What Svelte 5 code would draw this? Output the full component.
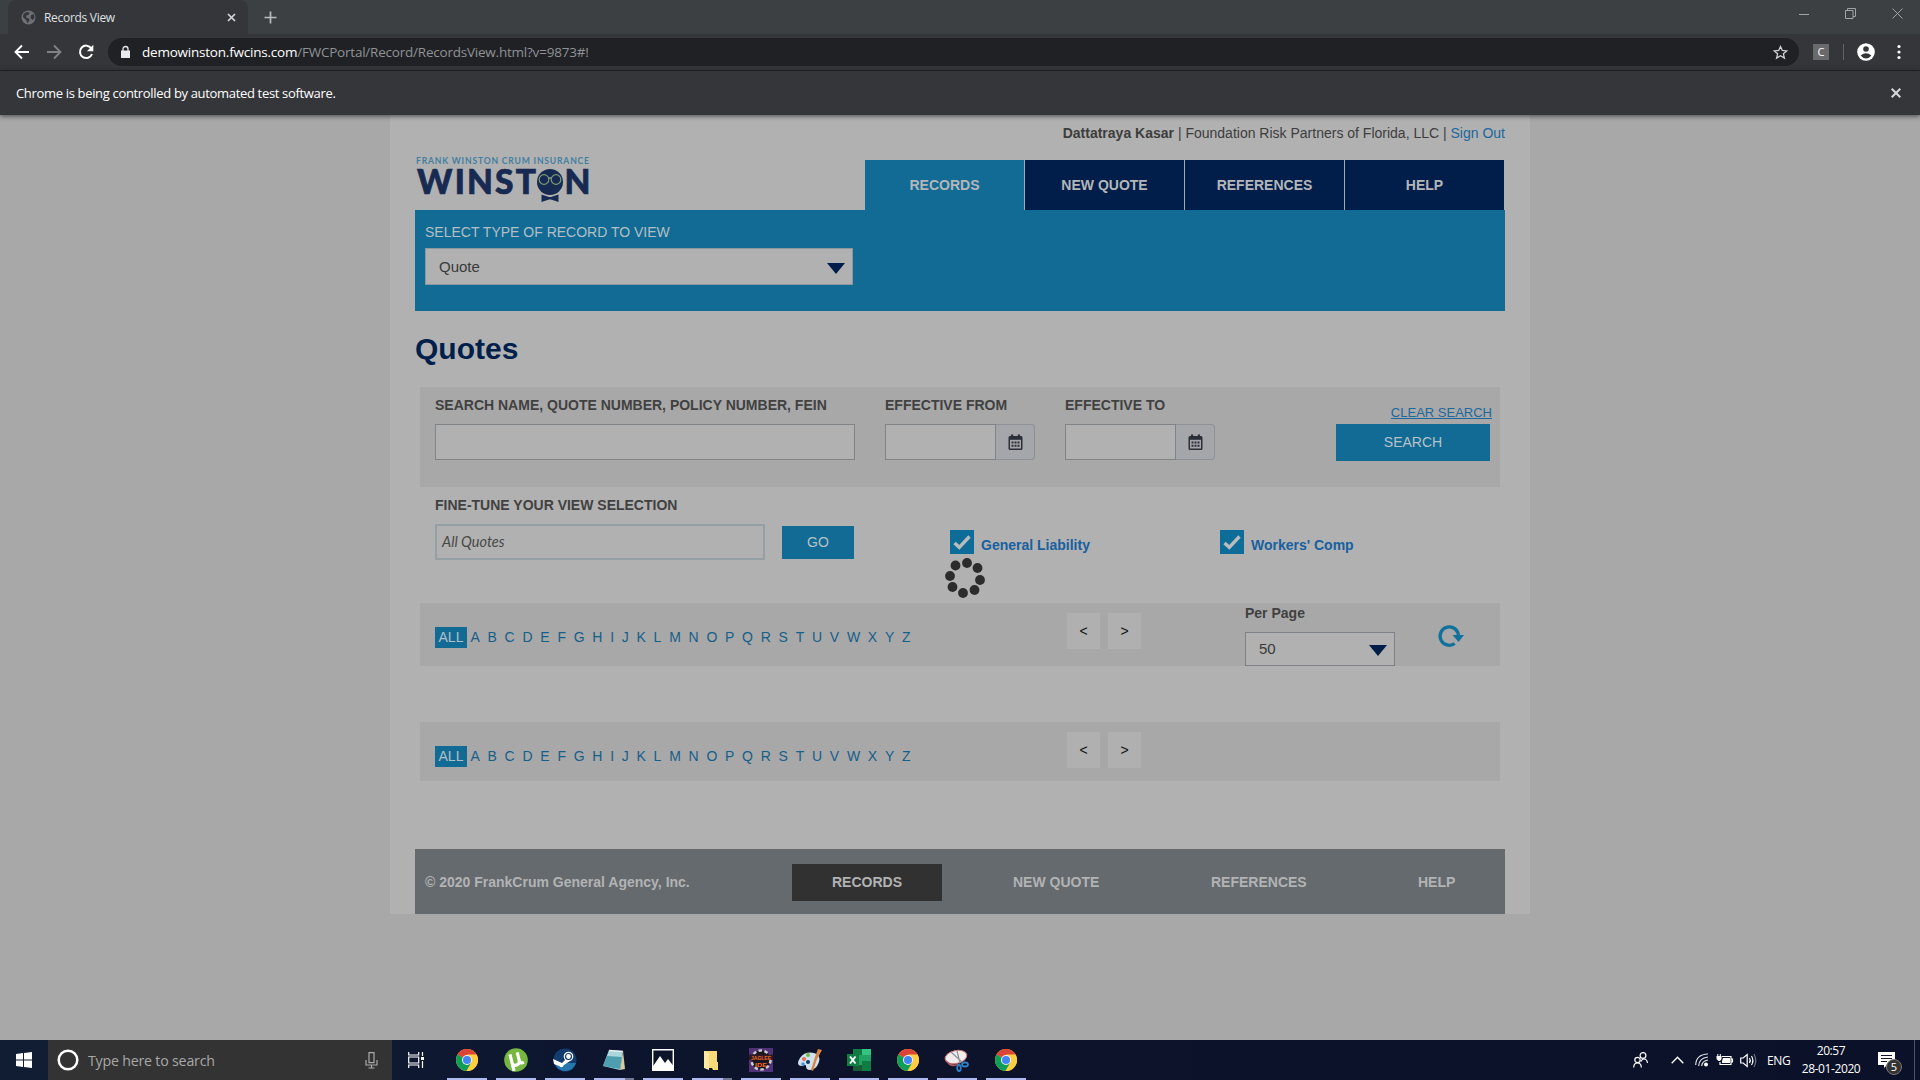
<script>
  const letters = 'ABCDEFGHIJKLMNOPQRSTUVWXYZ'.split('');
  const tabs = ['RECORDS', 'NEW QUOTE', 'REFERENCES', 'HELP'];
  const apps = ['chrome', 'utorrent', 'steam', 'notepad', 'photos', 'folder', 'ide', 'paint', 'excel', 'chrome', 'snip', 'chrome'];
  const dots = [[20, 5], [30.5, 10], [33, 22], [27.5, 32], [16, 35], [5.5, 29], [3, 18], [8.5, 7.5]];
</script>

{#snippet calendar()}
  <svg width="15" height="17" viewBox="0 0 15 17"><path d="M2 2h1V.5h2.200V2h4.600V.5H12V2h1a1.500 1.500 0 0 1 1.500 1.500v11A1.500 1.500 0 0 1 13 16H2A1.500 1.500 0 0 1 .5 14.500v-11A1.500 1.500 0 0 1 2 2z" fill="#2c2f38"/><path d="M2 5.800h11v8.700H2z" fill="#a4a6aa"/><path d="M3.500 7.500h2v2h-2zm3 0h2v2h-2zm3 0h2v2h-2zm-6 3.200h2v2h-2zm3 0h2v2h-2zm3 0h2v2h-2z" fill="#2c2f38"/></svg>
{/snippet}

{#snippet alphabet()}
  <div class="alphabet">
    <span class="all">ALL</span>
    {#each letters as l}<span>{l}</span>{/each}
  </div>
  <div class="pager"><button>&lt;</button><button>&gt;</button></div>
{/snippet}

{#snippet check()}
  <span class="check"><svg width="24" height="24" viewBox="0 0 24 24"><path d="M4.500 13l4.800 4.300L19.500 6.500" fill="none" stroke="#b8bcbe" stroke-width="3.400"/></svg></span>
{/snippet}

<div class="screen">
  <div class="tabstrip">
    <div class="stub"></div>
    <div class="tab">
      <svg width="15" height="15" viewBox="0 0 15 15"><circle cx="7.500" cy="7.500" r="7" fill="#6d7175"/><path d="M2.500 4l3-2 3 .5-.5 2-2.500 1-.5 2 3 1 .5 2-2 2.500-1.500-3-3-3zM10 5l3-1 .5 4-2 2-2-2z" fill="#35363a"/></svg>
      <span class="tabname">Records View</span>
      <svg class="tabx" width="9" height="9" viewBox="0 0 9 9"><path d="M1 1l7 7M8 1l-7 7" stroke="#d5d7d9" stroke-width="1.700"/></svg>
    </div>
    <svg class="plus" width="13" height="13" viewBox="0 0 13 13"><path d="M6.500 .5v12M.5 6.500h12" stroke="#b9bbbd" stroke-width="1.700"/></svg>
    <div class="winctl">
      <svg width="10" height="12" viewBox="0 0 10 12"><path d="M0 6.500h10" stroke="#a1a4a6"/></svg>
      <svg width="11" height="11" viewBox="0 0 11 11"><path d="M.5 2.500h7.500v8H.5zM2.500 2.500v-2h8v8H8" fill="none" stroke="#a1a4a6"/></svg>
      <svg width="11" height="11" viewBox="0 0 11 11"><path d="M.5 .5l10 10M10.500 .5l-10 10" stroke="#a1a4a6"/></svg>
    </div>
  </div>
  <div class="toolbar">
    <svg width="16" height="16" viewBox="0 0 16 16"><path d="M15 8H2M8 1.500L1.500 8 8 14.500" fill="none" stroke="#fff" stroke-width="1.900"/></svg>
    <svg width="16" height="16" viewBox="0 0 16 16"><path d="M1 8h13M8 1.500L14.500 8 8 14.500" fill="none" stroke="#7f8184" stroke-width="1.900"/></svg>
    <svg width="16" height="16" viewBox="0 0 16 16"><path d="M13.300 4.300A6.200 6.200 0 1 0 14 10" fill="none" stroke="#fff" stroke-width="2"/><path d="M15.300 .8v6.400H8.900z" fill="#fff"/></svg>
    <div class="address">
      <svg width="9" height="13" viewBox="0 0 9 13"><path d="M0 4.500h9V12H0z" fill="#e8eaed"/><path d="M2 5V3a2.500 2.500 0 0 1 5 0v2" fill="none" stroke="#e8eaed" stroke-width="1.300"/></svg>
      <span class="url"><b>demowinston.fwcins.com</b>/FWCPortal/Record/RecordsView.html?v=9873#!</span>
      <svg class="star" width="15" height="15" viewBox="0 0 15 15"><path d="M7.500 1.500l1.800 4 4.400.4-3.300 2.900 1 4.300-3.900-2.300-3.900 2.300 1-4.300L1.300 5.900l4.400-.4z" fill="none" stroke="#d0d2d4" stroke-width="1.300"/></svg>
    </div>
    <span class="ext">C</span>
    <span class="sep"></span>
    <svg class="avatar" width="18" height="18" viewBox="0 0 18 18"><circle cx="9" cy="9" r="8.800" fill="#fff"/><circle cx="9" cy="6" r="2.800" fill="#35363a"/><path d="M3.600 12.500q5.400-4.500 10.800 0Q12 15.500 9 15.500t-5.400-3z" fill="#35363a"/></svg>
    <svg class="menu" width="4" height="16" viewBox="0 0 4 16"><circle cx="2" cy="2.500" r="1.600" fill="#fff"/><circle cx="2" cy="8" r="1.600" fill="#fff"/><circle cx="2" cy="13.500" r="1.600" fill="#fff"/></svg>
  </div>
  <div class="infobar">
    <span>Chrome is being controlled by automated test software.</span>
    <svg width="10" height="10" viewBox="0 0 10 10"><path d="M.7 .7l8.600 8.600M9.300 .7L.7 9.300" stroke="#d5d7d9" stroke-width="2"/></svg>
  </div>

  <main>
    <div class="site">
      <div class="user"><span><b>Dattatraya Kasar</b> | Foundation Risk Partners of Florida, LLC | <a href="#out">Sign Out</a></span></div>
      <div class="head">
        <svg class="logo" width="176" height="50" viewBox="0 0 176 50">
          <text x="1" y="9.700" textLength="173" font-family="Lato" font-weight="700" font-size="8.600" fill="#437fa0">FRANK WINSTON CRUM INSURANCE</text>
          <text x="2" y="39.500" textLength="119" font-family="Lato" font-weight="900" font-size="33.500" fill="#172a52" stroke="#172a52" stroke-width=".7">WINST</text>
          <circle cx="135" cy="28" r="13" fill="#172a52"/>
          <g fill="none" stroke="#7d9b78" stroke-width="1.200"><circle cx="129" cy="25.500" r="4.800"/><circle cx="141" cy="25.500" r="4.800"/><path d="M133.500 24.500q1.500-1.500 3 0"/></g>
          <path d="M126.500 40.500l7.500 2.500h2l7.500-2.500v7.500l-7.500-2.500h-2l-7.500 2.500z" fill="#172a52"/>
          <text x="149.500" y="39.500" font-family="Lato" font-weight="900" font-size="33.500" fill="#172a52" stroke="#172a52" stroke-width=".7">N</text>
        </svg>
        <nav>{#each tabs as t, i}<span class:active={i === 0}>{t}</span>{/each}</nav>
      </div>
      <section class="type">
        <div class="typelabel">SELECT TYPE OF RECORD TO VIEW</div>
        <div class="select"><span>Quote</span><i></i></div>
      </section>
      <h1>Quotes</h1>

      <section class="search">
        <div class="field wide"><label for="q">SEARCH NAME, QUOTE NUMBER, POLICY NUMBER, FEIN</label><input id="q" /></div>
        <div class="field"><label for="from">EFFECTIVE FROM</label><div class="date"><input id="from" /><span>{@render calendar()}</span></div></div>
        <div class="field to"><label for="to">EFFECTIVE TO</label><div class="date"><input id="to" /><span>{@render calendar()}</span></div></div>
        <div class="actions"><a href="#clear">CLEAR SEARCH</a><button>SEARCH</button></div>
      </section>

      <section class="tune">
        <div class="field"><label for="v">FINE-TUNE YOUR VIEW SELECTION</label>
          <div class="tunerow"><div class="view" id="v">All Quotes</div><button>GO</button></div></div>
        <div class="opt">{@render check()}<span>General Liability</span></div>
        <div class="opt">{@render check()}<span>Workers' Comp</span></div>
        <svg class="spinner" width="42" height="42" viewBox="-2 0 42 42">{#each dots as [x, y]}<circle cx={x} cy={y} r="4.900" fill="#2c2c2c"/>{/each}</svg>
      </section>

      <section class="bar">
        {@render alphabet()}
        <div class="perpage"><span class="lab">Per Page</span><div class="select small"><span>50</span><i></i></div></div>
        <svg class="refresh" width="25" height="24" viewBox="0 0 25 24"><path d="M15.700 19.500A9.200 9.200 0 1 1 19.500 12" fill="none" stroke="#0f719c" stroke-width="3.300"/><path d="M13.500 11H25l-5.500 7z" fill="#0f719c"/></svg>
      </section>
      <section class="bar second">{@render alphabet()}</section>

      <footer>
        <span class="copy">© 2020 FrankCrum General Agency, Inc.</span>
        {#each tabs as t, i}<span class="f{i}">{t}</span>{/each}
      </footer>
    </div>
  </main>

  <div class="taskbar">
    <div class="start"><svg width="16" height="16" viewBox="0 0 16 16"><path d="M0 2l7-1v6.500H0zM8 .9L16 0v7.500H8zM0 8.500h7V15l-7-1zM8 8.500h8V16l-8-1z" fill="#fff"/></svg></div>
    <div class="find">
      <svg width="22" height="22" viewBox="0 0 22 22"><circle cx="11" cy="11" r="9.300" fill="none" stroke="#fff" stroke-width="2.500"/></svg>
      <span>Type here to search</span>
      <svg width="13" height="17" viewBox="0 0 13 17"><path d="M4 .7h5v10H4zM1 8v5h11V8M6.500 13v3M3.500 16h6" fill="none" stroke="#aaa" stroke-width="1.200"/></svg>
    </div>
    <div class="taskview"><svg width="17" height="16" viewBox="0 0 17 16"><path d="M.7 0v3h10V0M.7 5h10v6H.7zM.7 16v-3h10v3M14.500 0v4M14.500 9v7" fill="none" stroke="#fff" stroke-width="1.200"/><path d="M13 5h3v3h-3z" fill="#fff"/></svg></div>
    {#each apps as a}
      <div class="app" class:multi={a === 'notepad' || a === 'folder'}>
        <svg width="24" height="24" viewBox="0 0 24 24">
          {#if a === 'chrome'}
            <circle cx="12" cy="12" r="11" fill="#ffcd40"/><path d="M12 12L2.500 6.500A11 11 0 0 1 21.500 6.500z" fill="#db4437"/><path d="M12 12L2.500 6.500A11 11 0 0 0 11.500 23l5-8.500z" fill="#0f9d58"/><path d="M11.500 23a11 11 0 0 0 10-16.500H12l4.500 8z" fill="#ffcd40"/><circle cx="12" cy="12" r="5" fill="#f1f1f1"/><circle cx="12" cy="12" r="4" fill="#4285f4"/>
          {:else if a === 'utorrent'}
            <circle cx="12" cy="12" r="11.800" fill="#76b83f"/><g transform="rotate(-14 12 12)"><path d="M7.500 5v9q0 3 3.500 3t4-3.500V5M15 13q0 4 4 3M7.500 12v10" fill="none" stroke="#fff" stroke-width="3.200"/></g>
          {:else if a === 'steam'}
            <circle cx="12" cy="12" r="11.500" fill="#123c70"/><path d="M1 15q5 9 12 8 8-1 10-8z" fill="#2577b0"/><path d="M0 11l9 4 5-5 3 3-6 4q-2 4-5 1l-5-2z" fill="#fff"/><circle cx="15.500" cy="8.500" r="4.800" fill="#fff"/><circle cx="15.500" cy="8.500" r="3" fill="none" stroke="#123c70" stroke-width="1.200"/>
          {:else if a === 'notepad'}
            <path d="M7 2l14 1-3 19L1 18z" fill="#a9d5dd"/><path d="M5 8l15 1-2 12L1 18z" fill="#4d9eaf"/><path d="M21 3l2 18-5 1z" fill="#d6cda8"/><path d="M7 2.500l14 1" stroke="#e9eef0" stroke-width="1.500"/>
          {:else if a === 'photos'}
            <path d="M1.700 1.700h20.600v20.600H1.700z" fill="#0c142b" stroke="#fff" stroke-width="1.400"/><path d="M1.500 19L9 8l5 7 3-4 5.500 7v4h-21z" fill="#fff"/>
          {:else if a === 'folder'}
            <path d="M4 3h13v11h1v8h-5l-1-2H4z" fill="#f9d978"/><path d="M4 3l5 2v17l-5-2z" fill="#ffe9a2"/>
          {:else if a === 'ide'}
            <path d="M0 0h24v24H0z" fill="#503279"/><circle cx="12" cy="12" r="9.500" fill="#1c1621" stroke="#ccc" stroke-width="2.500" stroke-dasharray="3.500 2.500"/><path d="M0 6.500h24v5.500H0z" fill="#2d1a25"/><text x="2" y="11.500" textLength="20" lengthAdjust="spacingAndGlyphs" font-size="6" font-weight="bold" fill="#f06a20" font-family="Liberation Sans">JAGLEE</text><text x="6" y="18.500" textLength="12" lengthAdjust="spacingAndGlyphs" font-size="6" font-weight="bold" fill="#f06a20" font-family="Liberation Sans">IDE</text>
          {:else if a === 'paint'}
            <path d="M2 10q5-7 14-5 7 2 5 9-3 8-9 8-4 0-4-4 0-2-4 0-4 0-4-3 0-2 2-5z" fill="#cfe2ee"/><circle cx="6" cy="11" r="2" fill="#e86d4c"/><circle cx="10" cy="7" r="2" fill="#70b84b"/><circle cx="5" cy="16" r="1.800" fill="#4a97db"/><circle cx="10" cy="14" r="2" fill="#12376b"/><path d="M20 1l4 1-5 9-4 12-2-1 4-13z" fill="#d88640"/>
          {:else if a === 'excel'}
            <path d="M6 1h18v22H6z" fill="#21a366"/><path d="M6 1h9v6H6z" fill="#107c41"/><path d="M15 1h9v6h-9z" fill="#33c481"/><path d="M15 13h9v10h-9z" fill="#107c41"/><path d="M6 17h9v6H6z" fill="#185c37"/><path d="M0 6h12v12H0z" fill="#107c41"/><path d="M3 8.500l5.500 7M8.500 8.500l-5.500 7" stroke="#fff" stroke-width="1.900"/>
          {:else}
            <ellipse cx="11" cy="9" rx="11" ry="6.500" fill="#f3ecec" stroke="#c77a7a" transform="rotate(-12 11 9)"/><path d="M1 12q7 8 16 2l-4 3Q4 21 1 12z" fill="#b05a5e"/><path d="M6 4l11 10M12 3l3 12" stroke="#8f9299" stroke-width="1.200"/><g fill="none" stroke="#2f80c2" stroke-width="1.800"><ellipse cx="14" cy="20" rx="1.800" ry="3"/><ellipse cx="20" cy="16.500" rx="3" ry="2"/></g>
          {/if}
        </svg>
      </div>
    {/each}
    <div class="tray">
      <svg width="15" height="16" viewBox="0 0 15 16"><g fill="none" stroke="#fff" stroke-width="1.200"><circle cx="10" cy="3.500" r="2.900"/><path d="M8 9.500q1-2.500 3-2.500 3 0 3.500 4"/><circle cx="4.500" cy="8" r="2.700"/><path d="M.7 15.500q0-4.500 3.800-4.500t3.800 4.500"/></g></svg>
      <svg class="t1" width="13" height="8" viewBox="0 0 13 8"><path d="M.7 7.300l5.800-6 5.800 6" fill="none" stroke="#fff" stroke-width="1.400"/></svg>
      <svg class="t2" width="14" height="14" viewBox="0 0 14 14"><g fill="none" stroke="#e3e5e8" stroke-width="1.200"><path d="M.7 12Q1 1.500 13 1"/><path d="M3.700 13Q4 5 13 4"/><path d="M6.700 13Q7 8 13 7"/></g><circle cx="11" cy="11.500" r="2" fill="#fff"/></svg>
      <svg class="t3" width="17" height="13" viewBox="0 0 17 13"><path d="M6 2.500h9v8H4V8M15 5h1.500v3H15" fill="none" stroke="#fff" stroke-width="1.200"/><path d="M7 4h7v5H6V7zM.5 2h5v3L4 7H2.500L.5 5zM1.300 0h1v2h-1zm2.500 0h1v2h-1z" fill="#fff"/></svg>
      <svg class="t4" width="17" height="15" viewBox="0 0 17 15"><g fill="none" stroke="#fff" stroke-width="1.200"><path d="M.7 5h2.500l4-3.500v12l-4-3.500H.7z"/><path d="M9.500 5q1.500 2.500 0 5M11.500 3q2.800 4.500 0 9"/><path d="M14 1q3.500 6.500 0 13" stroke="#6d7280"/></g></svg>
      <span class="lang">ENG</span>
      <div class="clock"><span>20:57</span><span>28-01-2020</span></div>
      <div class="note"><svg width="17" height="16" viewBox="0 0 17 16"><path d="M0 0h17v13h-8l-3 3v-3H0z" fill="#fff"/><path d="M3 3.500h11M3 6.500h11M3 9.500h6" stroke="#10172c" stroke-width="1.100"/></svg><span class="badge">5</span></div>
      <span class="peek"></span>
    </div>
  </div>
</div>

<style>
  :global(body) { overflow: hidden; }
  * { box-sizing: border-box; }
  .screen { width: 1920px; height: 1080px; display: flex; flex-direction: column; background: #a8a8a8; font-family: 'Liberation Sans', Arial, sans-serif; font-size: 14px; color: #3d3d3d; }
  svg { display: block; flex: none; overflow: visible; }
  a { color: #1c679c; }
  button { font: inherit; border: 0; padding: 0; }
  b { font-weight: bold; }

  .tabstrip { height: 34px; background: #3c4043; display: flex; align-items: stretch; flex: none; }
  .stub { width: 8px; }
  .tab { width: 240px; background: #35363a; border-radius: 8px 8px 0 0; display: flex; align-items: center; padding: 0 12px 0 13px; color: #dfe1e4; font: 12px 'Open Sans', sans-serif; }
  .tabname { margin-left: 8px; letter-spacing: -0.3px; }
  .tabx { margin-left: auto; }
  .plus { margin: 11px 0 0 16px; }
  .winctl { margin: 8px 17px 0 auto; display: flex; gap: 36px; }
  .toolbar { height: 37px; background: #35363a; border-bottom: 1px solid #252629; display: flex; align-items: center; padding: 0 19px 0 14px; flex: none; }
  .toolbar > svg + svg { margin-left: 16px; }
  .address { margin-left: 14px; width: 1692px; height: 28px; border-radius: 14px; background: #202124; display: flex; align-items: center; padding: 0 11px 0 13px; }
  .url { margin-left: 12px; font: 13.5px 'Open Sans', sans-serif; color: #8f9296; letter-spacing: -0.22px; white-space: nowrap; }
  .url b { font-weight: 400; color: #fff; }
  .star { margin-left: auto; }
  .ext { width: 16px; height: 16px; background: #6a6a6c; color: #fff; font: 11px/16px 'Open Sans', sans-serif; text-align: center; margin-left: 14px; }
  .sep { width: 1px; height: 16px; background: #606266; margin-left: 14px; }
  .toolbar > svg.avatar { margin-left: 13px; }
  .toolbar > svg.menu { margin-left: 22px; }
  .infobar { height: 44px; background: #35363a; color: #fff; display: flex; justify-content: space-between; align-items: center; padding: 0 19px 0 16px; font: 13px 'Open Sans', sans-serif; letter-spacing: -0.33px; flex: none; box-shadow: 0 1px 5px rgba(0, 0, 0, .6); z-index: 1; }

  main { height: 925px; flex: none; }
  .site { width: 1140px; height: 799px; margin: 0 auto; padding: 0 25px; background: #b1b1b1; }
  .user { height: 39px; padding-top: 10px; text-align: right; line-height: 16px; white-space: pre; }
  .user a { text-decoration: none; }
  .head { display: flex; justify-content: space-between; height: 56px; padding-right: 1px; }
  nav { display: flex; margin-top: 6px; height: 50px; }
  nav span { width: 160px; background: #001e49; color: #b4b6b9; border-left: 1px solid #a3a9b1; font-weight: bold; text-align: center; line-height: 50px; }
  nav span.active { width: 159px; background: #126b94; border: 0; }
  .type { height: 101px; background: #126b94; padding: 14px 10px; color: #b2bfc5; }
  .typelabel { line-height: 17px; height: 24px; }
  .select { width: 428px; height: 37px; border: 1px solid #8b979d; background: #b1b1b1; color: #3a3a3a; display: flex; align-items: center; justify-content: space-between; padding: 0 7px 0 13px; font-size: 15px; }
  .select i { border: 9px solid transparent; border-top: 11px solid #001e49; border-bottom: 0; margin-top: 3px; }
  h1 { margin: 0; height: 76px; padding-top: 20px; font-size: 30px; line-height: 35px; color: #001f4b; }
  label, .lab { display: block; font-weight: bold; color: #414141; line-height: 16px; white-space: nowrap; }
  .search { margin: 0 5px; height: 100px; background: #a8a8a8; display: flex; padding: 10px 10px 0 15px; }
  .search label { height: 27px; }
  .field.wide { width: 420px; }
  .field + .field { margin-left: 30px; width: 150px; }
  input { display: block; width: 100%; height: 36px; border: 1px solid #818487; background: #b1b1b1; padding: 0; }
  .date { display: flex; }
  .date input { width: 111px; }
  .date span { width: 40px; height: 36px; border: 1px solid #8d9096; border-left: 0; border-radius: 0 4px 4px 0; background: #a4a6aa; display: flex; align-items: center; justify-content: center; }
  .actions { margin-left: auto; width: 154px; padding-top: 7px; display: flex; flex-direction: column; }
  .actions a { align-self: flex-end; margin-right: -2px; height: 20px; line-height: 17px; font-size: 13px; }
  .actions button { height: 37px; padding-bottom: 2px; }
  .actions button, .tunerow button { background: #126b94; color: #b6c2c8; }
  .tune { position: relative; height: 116px; display: flex; padding: 10px 20px 0; }
  .tune label { height: 27px; }
  .tune .field { width: 515px; flex: none; }
  .tunerow { display: flex; align-items: center; }
  .view { width: 330px; height: 36px; border: 2px solid #94a0a4; padding: 0 5px; font: italic 14.500px/31px Lato, sans-serif; color: #484848; }
  .tunerow button { width: 72px; height: 33px; margin-left: 17px; }
  .opt { width: 270px; flex: none; height: 24px; margin-top: 33px; display: flex; font-weight: bold; color: #1860a0; }
  .opt > span:last-child { margin: 7px 0 0 7px; white-space: nowrap; line-height: 16px; }
  .check { width: 24px; height: 24px; background: #0d6c98; flex: none; }
  .spinner { position: absolute; left: 530px; top: 71px; }
  .bar { margin: 0 5px; height: 63px; background: #a8a8a8; display: flex; padding-left: 15px; }
  .bar.second { height: 59px; margin-top: 56px; }
  .alphabet { width: 632px; padding-top: 24px; display: flex; gap: 7.74px; color: #165f89; line-height: 21px; }
  .alphabet .all { width: 32px; margin-right: -4.300px; text-align: center; background: #126b94; color: #b2bfc5; height: 21px; }
  .pager { width: 178px; padding-top: 10px; display: flex; gap: 8px; }
  .pager button { width: 33px; height: 36px; padding-bottom: 1px; background: #b0b0b0; color: #111; font-size: 14px; }
  .perpage { width: 150px; padding-top: 2px; }
  .lab { height: 27px; }
  .select.small { width: 150px; height: 34px; border-color: #7e8287; padding-bottom: 1px; }
  .select.small i { margin-top: 4px; }
  .refresh { margin: 21px 0 0 44px; }
  footer { margin-top: 68px; height: 65px; background: #646a6e; color: #b2b3b4; font-weight: bold; display: flex; align-items: flex-start; padding: 15px 0 0 10px; white-space: nowrap; line-height: 37px; }
  .copy { width: 367px; }
  .f0 { width: 150px; height: 37px; background: #313131; text-align: center; }
  .f1 { width: 198px; padding-left: 71px; }
  .f2 { width: 207px; padding-left: 71px; }
  .f3 { padding-left: 71px; }

  .taskbar { height: 40px; flex: none; background: linear-gradient(90deg, #101e38, #0c132b 40%, #0a1128); display: flex; font-family: 'Open Sans', sans-serif; color: #fff; }
  .start { width: 48px; display: flex; align-items: center; justify-content: center; background: #101d33; }
  .find { width: 344px; background: #333; display: flex; align-items: center; padding: 0 14px 0 9px; font-size: 14.200px; color: #a8a8a8; letter-spacing: -0.2px; }
  .find span { margin: 0 auto 0 9px; }
  .taskview { width: 51px; display: flex; align-items: center; padding-left: 16px; }
  .app { width: 49px; padding: 8px 0 0 11.500px; background: linear-gradient(#b0baf2, #b0baf2) 4px 38px / 40px 2px no-repeat; }
  .app.multi { background-image: linear-gradient(90deg, #b0baf2 31px, #737994 31px); }
  .tray { margin-left: auto; width: 287px; display: flex; align-items: center; }
  .t1 { margin-left: 23px; } .t2 { margin-left: 11px; } .t3 { margin-left: 7px; } .t4 { margin-left: 7px; }
  .lang { font-size: 12px; margin-left: 10px; width: 24px; letter-spacing: -0.3px; }
  .clock { width: 58px; margin-left: 11px; font-size: 12px; line-height: 18px; display: flex; flex-direction: column; align-items: center; letter-spacing: -0.4px; white-space: nowrap; }
  .note { position: relative; margin-left: 18px; }
  .badge { position: absolute; left: 8px; top: 7px; width: 16px; height: 16px; border: 1px solid #777; border-radius: 50%; background: #333; font-size: 11px; line-height: 14px; text-align: center; }
  .peek { width: 1px; height: 40px; margin-left: 19px; background: #4c5468; }
</style>
